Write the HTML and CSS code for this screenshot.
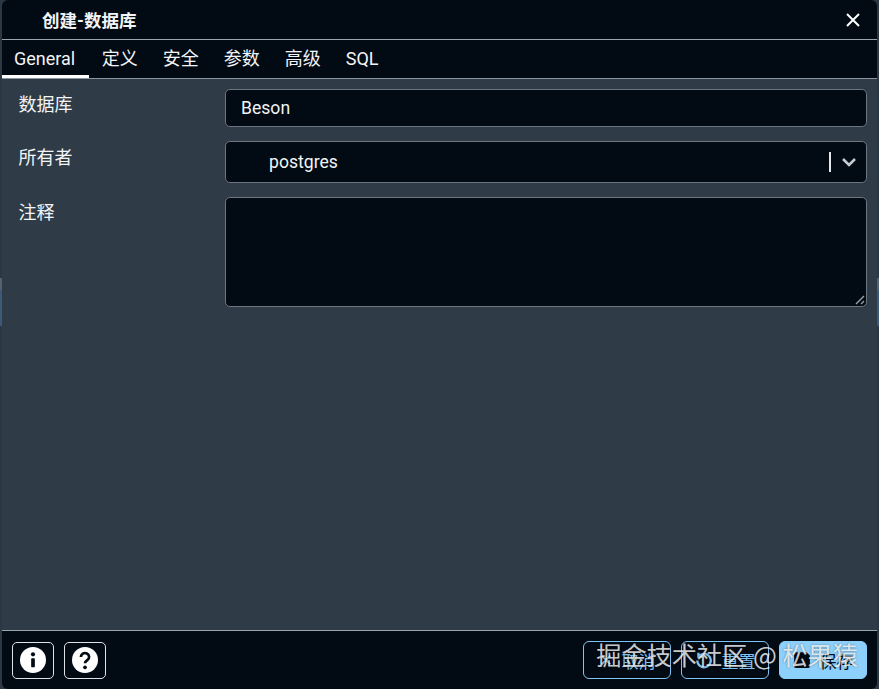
FILE: index.html
```html
<!DOCTYPE html>
<html lang="zh">
<head>
<meta charset="utf-8">
<title>创建-数据库</title>
<link rel="stylesheet" href="styles.css">
</head>
<body>
<div class="dialog">
  <header class="title-bar">
    <span class="title">创建-数据库</span>
    <svg class="close" viewBox="0 0 16 16" width="16" height="16"><path d="M2 2 14 14M14 2 2 14"/></svg>
  </header>
  <nav class="tabs">
    <span class="tab active">General</span>
    <span class="tab">定义</span>
    <span class="tab">安全</span>
    <span class="tab">参数</span>
    <span class="tab">高级</span>
    <span class="tab">SQL</span>
  </nav>
  <main class="form">
    <div class="row row-name">
      <label class="label">数据库</label>
      <div class="field field-name">Beson</div>
    </div>
    <div class="row row-owner">
      <label class="label">所有者</label>
      <div class="field field-owner">
        <span class="owner-value">postgres</span>
        <span class="sep"></span>
        <svg class="chev" viewBox="0 0 16 10" width="16" height="10"><path d="M2 2 8 8 14 2"/></svg>
      </div>
    </div>
    <div class="row row-comment">
      <label class="label">注释</label>
      <div class="field field-comment">
        <svg class="grip" viewBox="0 0 10 10" width="10" height="10"><path d="M1 9 9 1M6 9 9 6"/></svg>
      </div>
    </div>
  </main>
  <footer class="footer">
    <div class="group">
      <button class="icon-btn"><svg viewBox="0 0 24 24" width="26" height="26"><circle cx="12" cy="12" r="12" fill="#fff"/><rect x="10.300" y="10.300" width="3.400" height="8.400" rx=".8" fill="#020a14"/><circle cx="12" cy="6.800" r="1.900" fill="#020a14"/></svg></button>
      <button class="icon-btn"><svg viewBox="0 0 24 24" width="26" height="26"><circle cx="12" cy="12" r="12" fill="#fff"/><path d="M8.200 9.200a3.800 3.600 0 1 1 6 2.900c-1.300 1-2.200 1.500-2.200 3" fill="none" stroke="#020a14" stroke-width="2.500"/><circle cx="12" cy="18.800" r="1.700" fill="#020a14"/></svg></button>
    </div>
    <div class="group">
      <button class="btn outline"><svg viewBox="0 0 16 16" width="14" height="14"><path d="M3 3 13 13M13 3 3 13"/></svg>取消</button>
      <button class="btn outline"><svg viewBox="0 0 16 16" width="18" height="18"><path d="M3.500 4.500A6 6 0 1 1 2 8.500M3 1.500v3.400h3.400"/></svg>重置</button>
      <button class="btn solid"><svg viewBox="0 0 16 16" width="18" height="18"><path class="fill" d="M2 1h10l3 3v9.500a1.500 1.500 0 0 1-1.500 1.500h-11A1.500 1.500 0 0 1 1 13.500V2z"/></svg>保存</button>
    </div>
  </footer>
  <div class="watermark">掘金技术社区 @ 松果猿</div>
</div>
</body>
</html>
```
FILE: styles.css
```css
* { box-sizing: border-box; }
html, body { margin: 0; height: 100%; }
body {
  padding: 0 2px;
  font-family: Roboto, "Noto Sans CJK SC", sans-serif;
  color: #f2f4f6;
  overflow: hidden;
  background:
    linear-gradient(#3a5a78, #3a5a78) 0 290px / 100% 36px no-repeat,
    linear-gradient(#55626d, #55626d) 0 278px / 100% 12px no-repeat,
    #2b3843;
}
.dialog {
  position: relative;
  height: 689px;
  display: flex;
  flex-direction: column;
  background: #2f3b47;
  border-radius: 6px;
  overflow: hidden;
}
.title-bar {
  height: 40px;
  flex: none;
  display: flex;
  align-items: center;
  justify-content: space-between;
  padding: 0 16px 0 40px;
  background: #020a14;
  border-bottom: 1px solid #9aa5ae;
}
.title { font-size: 17.5px; font-weight: 700; color: #f2f4f6; }
.close { fill: none; stroke: #fff; stroke-width: 2; }
.tabs {
  height: 39px;
  flex: none;
  display: flex;
  background: #020a14;
  border-bottom: 1px solid #8b96a0;
}
.tab {
  padding: 0 12.5px;
  font-size: 18px;
  line-height: 38px;
  color: #f2f4f6;
}
.tab.active { border-bottom: 3px solid #fff; height: 38px; padding: 0 14px 0 12px; }
.form {
  flex: 1;
  display: flex;
  flex-direction: column;
  gap: 14px;
  padding: 10px 10px 0 0;
}
.row { display: flex; align-items: flex-start; }
.label {
  width: 223px;
  flex: none;
  padding: 5px 0 0 16.5px;
  font-size: 18px;
  line-height: 22px;
}
.row-owner .label { padding-top: 6px; }
.field {
  flex: 1;
  background: #020a14;
  border: 1px solid #6b7680;
  border-radius: 5px;
  font-size: 17.6px;
}
.field-name { height: 38px; line-height: 36px; padding-left: 15px; }
.field-owner {
  height: 42px;
  display: flex;
  align-items: center;
  padding: 0 9px 0 43px;
}
.owner-value { flex: 1; }
.sep { width: 2px; height: 20px; background: #e4e7ea; margin-right: 10px; }
.chev { fill: none; stroke: #c5cbd1; stroke-width: 2.6; }
.field-comment { height: 110px; position: relative; }
.grip { position: absolute; right: 1px; bottom: 1px; fill: none; stroke: #9aa3ab; stroke-width: 1.4; }
.footer {
  height: 59px;
  flex: none;
  display: flex;
  align-items: center;
  justify-content: space-between;
  padding: 0 10px;
  background: #020a14;
  border-top: 1px solid #9aa5ae;
}
.group { display: flex; gap: 10px; }
.icon-btn {
  width: 42px;
  height: 37px;
  padding: 0;
  display: flex;
  align-items: center;
  justify-content: center;
  background: transparent;
  border: 1px solid #dfe3e7;
  border-radius: 5px;
}
.btn {
  width: 88px;
  height: 38px;
  padding: 0;
  display: flex;
  align-items: center;
  justify-content: center;
  gap: 9px;
  border-radius: 6px;
  font-family: inherit;
  font-size: 17px;
}
.btn svg { fill: none; stroke: currentColor; stroke-width: 2; }
.btn.outline { background: transparent; border: 1px solid #7fc4f2; color: #7fc4f2; }
.btn.solid { background: #8dd0fb; border: 1px solid #8dd0fb; color: #020a14; }
.btn .fill { fill: #020a14; stroke: none; }
.watermark {
  position: absolute;
  right: 19px;
  bottom: 20px;
  font-family: "Noto Sans CJK SC", sans-serif;
  font-size: 25.2px;
  line-height: 30px;
  color: rgba(255, 255, 255, 0.8);
  text-shadow: 0 0 2px rgba(0, 0, 0, 0.45);
  white-space: nowrap;
}
```
